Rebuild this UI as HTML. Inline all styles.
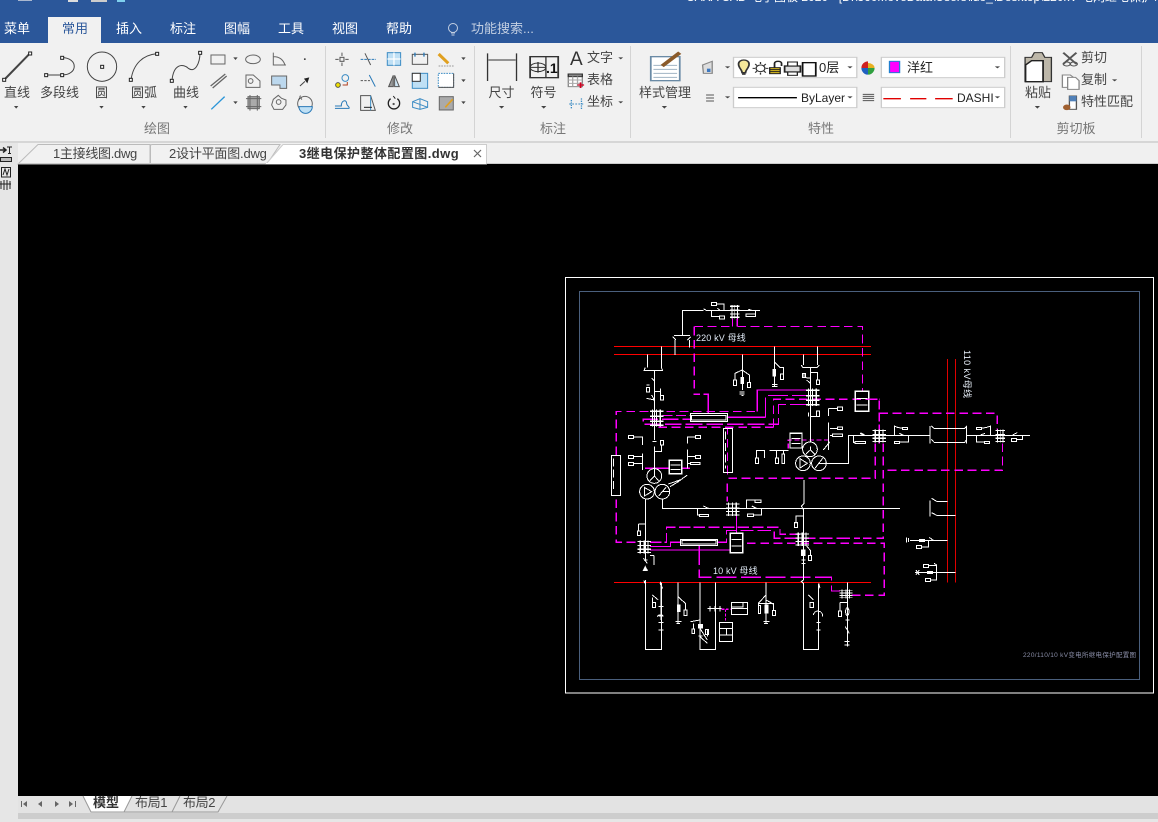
<!DOCTYPE html>
<html lang="zh"><head><meta charset="utf-8"><title>CAXA CAD</title>
<style>
html,body{margin:0;padding:0;background:#e6e6e6}
#p{position:relative;width:1158px;height:822px;overflow:hidden;background:#e6e6e6;font-family:"Liberation Sans","Noto Sans CJK SC",sans-serif;font-size:13px;color:#444}
#p div,#p span.t{position:absolute;white-space:nowrap}
.c{transform:translateX(-50%)}
.m{color:#fff;line-height:18px;top:20px}
.g{color:#777;top:121px;line-height:16px}
.l{line-height:16px}
svg{position:absolute;left:0;top:0}
</style></head><body><div id="p">
<div style="left:0;top:0;width:1158px;height:43px;background:#2b579a"></div>
<div style="left:686px;top:-11px;color:#fff;font-size:12px;line-height:16px">CAXA CAD 电子图板 2020 - [D:\360MoveData\Users\ldo_\Desktop\220kV 电网继电保护\</div>
<div style="left:18px;top:0;width:14px;height:1px;background:#aab8d0"></div>
<div style="left:68px;top:0;width:10px;height:2px;background:#ddd"></div>
<div style="left:91px;top:0;width:16px;height:2px;background:#ccc"></div>
<div style="left:117px;top:0;width:8px;height:2px;background:#7fd0ee"></div>
<div style="left:48px;top:17px;width:53px;height:27px;background:#f1f1f1"></div>
<div class="m" style="left:4px">菜单</div>
<div class="m" style="left:62px;color:#2b579a">常用</div>
<div class="m" style="left:116px">插入</div>
<div class="m" style="left:170px">标注</div>
<div class="m" style="left:224px">图幅</div>
<div class="m" style="left:278px">工具</div>
<div class="m" style="left:332px">视图</div>
<div class="m" style="left:386px">帮助</div>
<div class="m" style="left:471px;color:#c3cfe2">功能搜索...</div>
<div style="left:0;top:43px;width:1158px;height:98px;background:#f1f1f1"></div>
<div style="left:0;top:141px;width:1158px;height:2px;background:#d6d6d6"></div>
<div style="left:0;top:143px;width:1158px;height:21px;background:#f0f0f0"></div>
<div style="left:0;top:143px;width:18px;height:679px;background:#e6e6e6"></div>
<div style="left:18px;top:164px;width:1140px;height:632px;background:#000"></div>
<div style="left:18px;top:796px;width:1140px;height:17px;background:#e3e3e3"></div>
<div style="left:18px;top:813px;width:1140px;height:6px;background:#cdcdcd"></div>

<svg width="1158" height="822" viewBox="0 0 1158 822">
<defs>
<g id="gr" fill="none" stroke="#fff" stroke-width="3.500"><path d="M8,0V40M20,0V40M31,0V40M0,4H40M0,16H40M0,27H40M0,37H40"/></g>
</defs>
<!-- separators -->
<path d="M325.500,46V138M474.500,46V138M630.500,46V138M1010.500,46V138M1141.500,46V138" stroke="#d4d4d4"/>
<!-- doc tabs -->
<path d="M18,164L38,144.500H150V164Z" fill="#f1f1f1" stroke="#bbb"/>
<path d="M150.500,164V145L152,144.500H280L267,164Z" fill="#f1f1f1" stroke="#bbb"/>
<path d="M266,164L283,144.500H486.500V164Z" fill="#fff" stroke="#ccc"/>
<path d="M474,150L481,157M481,150L474,157" stroke="#666" stroke-width="1.200"/>
<path d="M18,163.500H1158" stroke="#ccc"/>
<path d="M266,163.500H486" stroke="#fff"/>
<!-- left strip icons -->
<g fill="none" stroke="#222" stroke-width="1">
<path d="M0,150H5M3,147.500L6,150L3,152.500" stroke-width="1.500"/>
<path d="M7,147H12M9.500,147V153.500M8,153.500H11"/>
<rect x="0.500" y="157.500" width="11" height="4" fill="#bbb"/>
<rect x="1.500" y="167.500" width="9" height="9.500"/><path d="M3,175L5,169L7,175L9,169"/>
<path d="M1,181V189M4,180V190M7,180V190M10,181V189M0,184H11"/>
</g>
<!-- bulb in tabs -->
<g fill="none" stroke="#c3cfe2" stroke-width="1"><circle cx="453" cy="28" r="4.500"/><path d="M451,33H455M451.500,35H454.500"/></g>
<!-- ribbon draw icons, zoom1 coordinates -->
<g transform="scale(.3333)" fill="none" stroke="#444" stroke-width="3">
<path d="M12,240L90,160" stroke-width="6"/>
<path d="M138,225H186M186,173C235,173 235,225 186,225"/>
<circle cx="306" cy="200" r="44"/>
<path d="M393,240C400,190 430,165 471,161"/>
<path d="M516,243C520,190 550,190 565,205C585,220 600,190 600,158"/>
<g fill="#fff" stroke="#222" stroke-width="3">
<rect x="8" y="235" width="9" height="9"/><rect x="86" y="156" width="9" height="9"/>
<rect x="134" y="221" width="9" height="9"/><rect x="182" y="221" width="9" height="9"/><rect x="182" y="169" width="9" height="9"/>
<rect x="302" y="196" width="9" height="9"/>
<rect x="388" y="235" width="9" height="9"/><rect x="467" y="157" width="9" height="9"/>
<rect x="511" y="238" width="9" height="9"/><rect x="596" y="154" width="9" height="9"/>
</g>
<g stroke="#666">
<rect x="633" y="165" width="42" height="27"/>
<ellipse cx="759" cy="178" rx="22" ry="13"/>
<path d="M820,158V195H858M820,170C840,170 850,180 855,195"/>
<path d="M632,258L676,222M638,264L680,228" stroke-width="4"/>
<path d="M738,225H760L780,243V262H738Z"/><circle cx="752" cy="243" r="7"/>
<path d="M815,228H860V265H840V255H815Z" fill="#bcd8ee"/>
<rect x="744" y="290" width="34" height="36" fill="#aaa"/>
<path d="M738,296H784M738,320H784M750,285V332M772,285V332"/>
<path d="M835,286L845,295L858,300V315L848,328H822L815,315L820,298Z"/><circle cx="836" cy="306" r="7"/>
<circle cx="915" cy="311" r="22"/>
<path d="M897,320H937A20,20 0 0 1 897,320Z" fill="#bfe0f5" stroke="#2a7ab8"/>
</g>
<path d="M634,328L674,290" stroke="#2a95d8" stroke-width="4"/>
<rect x="912" y="175" width="5" height="5" fill="#444" stroke="none"/>
<path d="M900,258L915,244" stroke="#444" stroke-width="3"/>
<path d="M912,236L928,232L922,250Z" fill="#222" stroke="none"/>
<text x="895" y="300" font-size="18" fill="#333" stroke="none">A</text>
<!-- modify -->
<g stroke="#555">
<rect x="1020" y="172" width="12" height="12"/><path d="M1026,158V168M1026,188V198M1006,178H1016M1036,178H1046"/>
<path d="M1082,178H1128" stroke="#2a7ab8" stroke-dasharray="8 3"/><path d="M1095,160L1112,195" stroke-width="3"/>
<path d="M1082,242H1110" stroke-dasharray="7 4"/><path d="M1108,225L1126,260" stroke="#2a7ab8"/>
<rect x="1162" y="158" width="40" height="38" fill="#bfe0f5" stroke="#3c8cc4"/><path d="M1182,158V196M1162,177H1202" stroke="#fff" stroke-width="4"/>
<rect x="1237" y="163" width="46" height="30" stroke="#555"/><path d="M1245,158V170M1272,158V170" stroke="#2a7ab8" stroke-width="4"/>
<path d="M1316,162L1345,190" stroke="#e0a020" stroke-width="9"/><path d="M1316,198H1362" stroke="#999" stroke-dasharray="5 3"/>
<circle cx="1014" cy="255" r="7" fill="#f0e000"/><circle cx="1036" cy="234" r="10" stroke="#3c8cc4"/><path d="M1028,255H1042V246" stroke="#b04020"/>
<path d="M1166,260L1180,226V260Z" fill="#999"/><path d="M1184,226L1198,260H1184Z" fill="#cfe6f5"/>
<rect x="1237" y="220" width="46" height="45" fill="#bfe0f5" stroke="#3c8cc4"/><rect x="1237" y="220" width="24" height="24" fill="#fff" stroke="#333"/>
<rect x="1315" y="220" width="46" height="42" fill="#fff" stroke="#3c8cc4" stroke-dasharray="5 3"/><path d="M1315,262H1361V220"/>
<path d="M1005,325H1048M1005,318H1024C1024,300 1040,298 1040,310C1040,318 1048,318 1048,325" stroke="#2a7ab8"/>
<path d="M1082,287H1112L1126,331H1082Z"/><path d="M1112,287V331" stroke="#3c8cc4"/><path d="M1092,322H1116" stroke="#222"/>
<path d="M1172,296A17,17 0 1 0 1192,296" stroke="#222" stroke-width="4"/><path d="M1180,288L1186,296" stroke="#222" stroke-width="3"/><circle cx="1181" cy="312" r="2" fill="#222"/>
<path d="M1238,305L1260,296L1283,305V322L1260,328L1238,322Z" stroke="#3c8cc4"/><path d="M1260,296V328M1238,305L1283,322" stroke="#3c8cc4"/>
<rect x="1318" y="290" width="42" height="40" fill="#aaa" stroke="#666"/><path d="M1336,322L1358,298" stroke="#e0a020" stroke-width="5"/>
</g>
<!-- small arrows -->
<g fill="#444" stroke="none">
<path d="M700,172H713L706.500,180Z"/><path d="M700,304H713L706.500,312Z"/>
<path d="M1384,172H1397L1390.500,180Z"/><path d="M1384,238H1397L1390.500,246Z"/><path d="M1384,304H1397L1390.500,312Z"/>
<path d="M42,318H55L48.500,326Z"/><path d="M298,318H311L304.500,326Z"/><path d="M424,318H437L430.500,326Z"/><path d="M550,318H563L556.500,326Z"/>
</g>
</g>
<!-- ribbon zoom2 coordinates -->
<g transform="translate(470 0) scale(.4388 .3333)" fill="none" stroke="#333" stroke-width="3">
<path d="M40,160V243M106,160V243M42,180H104" stroke-width="3"/>
<rect x="137" y="170" width="64" height="63" stroke-width="4"/><path d="M173,170V233"/>
<ellipse cx="155" cy="202" rx="18" ry="13"/><path d="M137,202H172M155,186V218"/>
<rect x="224" y="222" width="32" height="38" fill="#fff" stroke="#888"/><rect x="224" y="222" width="32" height="8" fill="#888"/>
<path d="M224,240H256M224,250H256M234,230V260M245,230V260" stroke="#aaa"/>
<path d="M245,255H260M252,247V264" stroke="#d00020" stroke-width="4"/>
<path d="M231,300V328M254,295V328M226,312H258" stroke="#3c8cc4" stroke-dasharray="4 3"/>
<rect x="412" y="170" width="66" height="72" fill="#fff" stroke="#6a8aa5" stroke-width="4"/>
<path d="M418,196H472M418,208H472M418,220H472M418,232H472" stroke="#a0b4c4"/>
<path d="M438,198L478,158" stroke="#8a5a2a" stroke-width="10"/>
<path d="M530,195L552,184V220H532Z" fill="#ddd" stroke="#888"/><rect x="540" y="206" width="8" height="10" fill="#3c78c0" stroke="none"/>
<path d="M538,285H556M538,294H556M538,303H556" stroke="#555"/>
<rect x="600.500" y="172" width="281" height="61" fill="#fff" stroke="#ccc"/>
<rect x="937.500" y="172" width="281" height="61" fill="#fff" stroke="#ccc"/>
<rect x="600.500" y="262" width="281" height="61" fill="#fff" stroke="#ccc"/>
<rect x="937.500" y="262" width="281" height="61" fill="#fff" stroke="#ccc"/>
<path d="M612,192C612,176 636,176 636,192C636,205 628,208 628,218H620C620,208 612,205 612,192Z" fill="#f5e89a" stroke="#333" stroke-width="4"/><path d="M620,222H628" stroke-width="5"/>
<circle cx="662" cy="205" r="10" stroke="#333"/><path d="M662,186V192M662,218V224M644,205H650M674,205H680M650,192L654,197M674,192L670,197M650,218L654,213M674,218L670,213" stroke="#333"/>
<rect x="683" y="203" width="24" height="18" fill="#e0c020" stroke="#222" stroke-width="3"/><path d="M683,209H707M683,215H707" stroke="#222"/><path d="M694,203V190C694,182 710,182 710,190V198" stroke="#222" stroke-width="4"/>
<rect x="717" y="198" width="36" height="18" fill="#ddd" stroke="#222" stroke-width="4"/><rect x="724" y="186" width="22" height="12" fill="#fff" stroke="#222"/><rect x="724" y="216" width="22" height="10" fill="#fff" stroke="#222"/>
<rect x="758" y="188" width="30" height="40" fill="#fff" stroke="#111" stroke-width="4"/>
<circle cx="907" cy="204" r="15" stroke="none" fill="#e8b020"/><path d="M907,204L892,204A15,20 0 0 1 907,184Z" fill="#d02020" stroke="none"/><path d="M907,204V224A15,20 0 0 1 892,204Z" fill="#2060c0" stroke="none"/><path d="M907,204L922,204A15,20 0 0 1 907,224Z" fill="#30a040" stroke="none"/>
<rect x="956" y="184" width="23" height="34" fill="#ff00ff" stroke="#2080d0" stroke-width="3"/>
<path d="M611,293H745" stroke="#000" stroke-width="4"/>
<path d="M895,283H921M895,289H921M895,295H921M895,302H921" stroke="#555"/>
<path d="M942,296H982M1003,296H1040M1060,296H1100" stroke="#e00000" stroke-width="4"/>
<path d="M1265,172V245H1325V172H1310L1304,158H1286L1280,172Z" fill="#bdb7a9" stroke="#333"/>
<path d="M1266,195L1280,182H1306V245H1266Z" fill="#fff" stroke="#222" stroke-width="4"/>
<path d="M1352,158L1382,192M1382,158L1352,192" stroke="#555" stroke-width="5"/><ellipse cx="1360" cy="192" rx="8" ry="6" stroke="#555"/><ellipse cx="1376" cy="192" rx="8" ry="6" stroke="#555"/>
<path d="M1350,225H1368L1378,235V262H1350Z" fill="#fff" stroke="#888"/><path d="M1362,232H1380L1388,242V268H1362Z" fill="#fff" stroke="#888"/>
<rect x="1366" y="288" width="16" height="40" fill="#fff" stroke="#555"/><rect x="1366" y="288" width="16" height="16" fill="#5080b8" stroke="none"/><circle cx="1360" cy="322" r="7" fill="#a06030" stroke="#a06030"/>
<g fill="#444" stroke="none">
<path d="M66,318H78L72,326Z"/><path d="M162,318H174L168,326Z"/><path d="M437,318H449L443,326Z"/><path d="M1287,318H1299L1293,326Z"/>
<path d="M338,172H349L343.500,178Z"/><path d="M338,304H349L343.500,310Z"/>
<path d="M581,199H593L587,205Z"/><path d="M581,289H593L587,295Z"/>
<path d="M860,199H872L866,205Z"/><path d="M860,289H872L866,295Z"/>
<path d="M1196,199H1208L1202,205Z"/><path d="M1196,289H1208L1202,295Z"/><path d="M1463,238H1475L1469,244Z"/>
</g>
</g>
<!-- nav arrows, bottom tabs -->
<g fill="#666"><path d="M27,801V807L23,804Z"/><rect x="21" y="801" width="1" height="6"/><path d="M42,801V807L38,804Z"/><path d="M55,801V807L59,804Z"/><path d="M69,801V807L73,804Z"/><rect x="75" y="801" width="1" height="6"/></g>
<path d="M83,796L91,812H124L132,796Z" fill="#fff"/>
<path d="M83,796L91,812H124L132,796M124,812H172L180,796M172,812H218L227,796" fill="none" stroke="#999"/>
<!-- drawing -->
<g shape-rendering="crispEdges" fill="none">
<rect x="565.500" y="277.500" width="588" height="415.500" stroke="#fff"/>
<rect x="579.500" y="291.500" width="560" height="388" stroke="#4a5f7d"/>
<path d="M614,346.500H871M614,354.500H871M614,582.500H871" stroke="#f00" stroke-width="1"/>
<path d="M947.500,359V582.500M955.500,359V582.500" stroke="#e00000"/>
<!-- zoom3 -->
<g transform="translate(600 290) scale(.3333)" stroke-width="3">
<g stroke="#f0f" stroke-width="3.500">
<path d="M283,110V313H300" stroke-dasharray="26 14"/>
<path d="M283,110H398M412,110H788V305" stroke-dasharray="26 14"/>
<path d="M398,85V110M412,85V110"/>
<path d="M310,313H325V370M472,365V300H620M383,382H497"/>
<path d="M497,382V317H620" stroke-dasharray="60 12"/>
<path d="M49,495V365H472" stroke-dasharray="26 14"/>
<path d="M521,412V328H838" stroke-dasharray="26 14"/>
<path d="M826,460V565H383V412" stroke-dasharray="26 14"/>
<path d="M175,412H521" stroke-dasharray="26 14"/>
<path d="M620,344H536V403H130V388H270" stroke-dasharray="50 12"/>
<path d="M135,535H208M245,535H270"/>
<path d="M565,475V450H690" stroke-dasharray="14 8"/>
<path d="M188,377H270" stroke-dasharray="30 10"/>
</g>
<g stroke="#fff">
<path d="M247,135V62H310M320,62H480M350,42H372V60M335,62V80H358M352,55L362,62"/>
<rect x="334" y="38" width="16" height="9"/><rect x="358" y="78" width="16" height="9"/><rect x="438" y="72" width="28" height="7"/><path d="M466,75V62"/>
<path d="M310,56L320,62M445,58L458,62"/>
<path d="M222,136H270M218,140L228,150M262,150L272,140M225,150V195M268,150V172M247,135V138"/>
<path d="M142,193V232M184,170V232M136,232L132,242H188L184,232M163,242V272L155,265M163,272V330L155,315M181,305H163M163,330L140,325M181,295V316M139,285H149"/>
<rect x="139" y="292" width="10" height="14"/><rect x="181" y="316" width="10" height="14"/>
<path d="M163,330V450M163,470V545M157,455H170"/>
<rect x="181" y="452" width="9" height="13"/><path d="M185,465V484H165"/>
<path d="M427,193V300M427,240L405,250V270M427,240L448,255V277"/>
<rect x="400" y="270" width="10" height="16"/><rect x="442" y="277" width="10" height="16"/><rect x="423" y="262" width="8" height="18" fill="#fff"/>
<path d="M418,306H434M418,312H434M424,316H430"/>
<path d="M523,170V290M523,215L540,232H550V252"/><rect x="519" y="238" width="8" height="20" fill="#fff"/><rect x="541" y="252" width="10" height="16"/><path d="M516,284H532M516,290H532"/>
<path d="M610,193V225M652,170V225M604,225L608,232H652L658,225M631,232V458M612,250V262M631,265L612,262M631,248H652V270M620,270L631,280"/>
<rect x="607" y="250" width="9" height="12"/><rect x="649" y="270" width="9" height="14"/>
<rect x="649" y="363" width="9" height="16"/><path d="M625,368V380M631,380H650"/>
<rect x="271" y="371" width="111" height="24" stroke-width="3"/><rect x="275" y="376" width="103" height="14"/>
<rect x="766" y="304" width="40" height="60" stroke-width="4"/><path d="M770,325H802M770,345H802"/>
<rect x="370" y="415" width="28" height="132" stroke-width="3"/><path d="M377,425V535" stroke-dasharray="24 10"/>
<rect x="34" y="496" width="28" height="120" stroke-width="3"/><path d="M40,505V600" stroke-dasharray="24 10"/>
<rect x="85" y="436" width="16" height="9"/><rect x="85" y="496" width="16" height="9"/><rect x="85" y="517" width="16" height="9"/><rect x="272" y="517" width="28" height="7"/><rect x="286" y="436" width="16" height="9"/><rect x="286" y="496" width="16" height="9"/>
<path d="M101,441H127V465M101,500H127M101,521H127M127,490V540M286,441H262V460M286,500H262M272,521H262M262,478V535"/>
<path d="M262,555L235,575L210,590"/>
<rect x="208" y="511" width="37" height="40" stroke-width="4"/><path d="M212,525H241M212,538H241"/>
<circle cx="163" cy="558" r="22"/><path d="M163,545V558M163,558L150,572M163,558L176,572"/>
<rect x="570" y="430" width="36" height="44" stroke-width="4"/><path d="M574,445H602M574,460H602"/>
<circle cx="630" cy="478" r="22"/><circle cx="609" cy="520" r="22"/><circle cx="657" cy="520" r="22"/>
<path d="M600,506L622,520L600,534ZM645,535L668,505M657,520H680M680,520H745V436H782M782,436H830"/>
<path d="M631,470V480M631,480L618,492M631,480L644,492"/>
<path d="M685,355H712M685,355V378M685,398V480M690,415L712,415M690,436L698,436M670,480L690,455M760,436V458H765M782,428L795,436"/>
<rect x="712" y="351" width="16" height="10"/><rect x="712" y="411" width="16" height="7"/><rect x="698" y="432" width="30" height="8"/><rect x="765" y="454" width="32" height="7"/>
<path d="M468,482H494V504M470,482V504M508,482H565M530,482V505M550,482V492"/>
<rect x="466" y="504" width="9" height="16"/><rect x="526" y="504" width="9" height="16"/><rect x="546" y="492" width="8" height="28"/>
</g>
<g transform="translate(390 45) scale(.72 1)"><use href="#gr"/></g>
<g transform="translate(150 358) scale(1 1.300)"><use href="#gr"/></g>
<g transform="translate(618 296) scale(1 1.300)"><use href="#gr"/></g>
</g>
<!-- zoom4 -->
<g transform="translate(600 480) scale(.3333)" stroke-width="3">
<g stroke="#f0f" stroke-width="3.500">
<path d="M49,58V187H115" stroke-dasharray="26 14"/>
<path d="M150,187H200V142H540V163H600" stroke-dasharray="34 10"/>
<path d="M150,200H212V187H240"/>
<path d="M352,187H380V152H523V175H780" stroke-dasharray="40 12"/>
<path d="M150,210H390"/>
<path d="M298,195V292H695V333H720" stroke-dasharray="60 14"/>
<path d="M755,346H853V190H430" stroke-dasharray="26 14"/>
<path d="M410,100V160"/>
<path d="M382,10V65" stroke-dasharray="26 14"/>
<path d="M365,388H395M377,388V425" stroke-dasharray="8 5"/>
</g>
<g stroke="#fff">
<circle cx="141" cy="35" r="22"/><circle cx="187" cy="35" r="22"/>
<path d="M133,22L155,35L133,48ZM176,48L198,22M187,35H210M205,12L240,0"/>
<path d="M136,57V240M115,132H136M115,132V155M187,57V85H900"/>
<rect x="112" y="153" width="9" height="13"/>
<path d="M136,260V270M132,240H142M162,226V255M150,226H162M130,235L142,250M132,268L142,268M136,260L130,272L142,272Z"/>
<path d="M136,300V508H185V310L180,306M135,310L132,302"/>
<path d="M183,307V420M180,310L188,325M157,345L175,360M157,368V352M176,380H190M176,408H190M172,410A10,10 0 0 1 190,410M176,428H190M176,450H190"/>
<rect x="157" y="368" width="10" height="15"/>
<path d="M234,307V430M234,350L256,370V390M227,425H245M230,430H240"/>
<rect x="232" y="375" width="8" height="20" fill="#fff"/><rect x="252" y="390" width="9" height="17"/>
<path d="M300,307V508H346V307M300,420L272,425M280,430V448M300,445L322,480M322,448V470M300,470L322,490"/>
<rect x="276" y="447" width="8" height="14"/><rect x="317" y="448" width="9" height="16"/><rect x="295" y="434" width="12" height="10" fill="#fff"/><path d="M295,468H307"/>
<path d="M322,386H365M330,378V394M345,378V394M360,378V394"/>
<rect x="394" y="368" width="49" height="36" stroke-width="3"/><rect x="394" y="368" width="35" height="13"/><path d="M396,386H441"/>
<rect x="358" y="427" width="40" height="58" stroke-width="3"/><path d="M360,445H396M360,465H396M380,445V465"/>
<rect x="391" y="160" width="37" height="58" stroke-width="4"/><path d="M395,178H424M395,198H424"/>
<rect x="241" y="178" width="112" height="18" stroke-width="3"/><rect x="246" y="182" width="102" height="10"/>
<path d="M292,85V105H300M310,78L325,85"/><rect x="298" y="103" width="28" height="6"/>
<path d="M440,85V60H465M485,85V105H460M455,78L470,85"/><rect x="465" y="60" width="18" height="8"/><rect x="443" y="102" width="17" height="8"/>
<path d="M612,0V70L604,78L610,88V300L604,304L610,310V508H656V310M610,108H588V130"/>
<rect x="583" y="128" width="9" height="14"/>
<path d="M610,198V250M620,198L632,212V226"/><rect x="625" y="226" width="9" height="16"/><rect x="605" y="210" width="10" height="16" fill="#fff"/><path d="M604,240H616M604,250H616"/>
<path d="M656,310L660,325M625,345L640,360M656,352V400M640,405A10,10 0 0 1 668,410M650,428H662M650,450H662"/>
<rect x="630" y="368" width="10" height="15"/>
<path d="M498,307V430M498,345L475,370V376M498,360L520,372V392M475,370H522M490,425H508M492,430H504"/>
<rect x="475" y="376" width="7" height="24"/><rect x="495" y="375" width="9" height="24" fill="#fff"/><rect x="517" y="392" width="10" height="15"/>
<path d="M742,307V500M720,368V393M742,368H720M736,420H748M736,440L748,460M734,485H748M734,495H748"/>
<rect x="715" y="393" width="9" height="16"/><ellipse cx="742" cy="395" rx="5" ry="12"/>
</g>
<use href="#gr" x="378" y="68"/>
<use href="#gr" x="113" y="181"/>
<use href="#gr" x="587" y="158"/>
<g transform="translate(718 328) scale(1 .68)"><use href="#gr"/></g>
</g>
<!-- zoom5 -->
<g transform="translate(860 340) scale(.3333)" stroke-width="3">
<g stroke="#f0f" stroke-width="3.500">
<path d="M25,178H58V310" stroke-dasharray="28 8"/>
<path d="M58,220H412V268" stroke-dasharray="26 14"/>
<path d="M428,310V391H70" stroke-dasharray="26 14"/>
<path d="M46,310V415H0" stroke-dasharray="26 14"/>
<path d="M70,310V595H0" stroke-dasharray="26 14"/>
</g>
<g stroke="#fff">
<path d="M0,286H210M320,286H510"/>
<rect x="128" y="262" width="15" height="7"/><rect x="103" y="304" width="16" height="7"/><path d="M103,286V258L112,262L128,265M146,286V306H119M118,280L130,286"/>
<path d="M210,258V310M320,258V310M222,265H315M222,307H315M214,258L222,265M314,265L320,258M214,298L222,307M314,307L320,298"/>
<rect x="349" y="262" width="15" height="7"/><rect x="373" y="304" width="16" height="7"/><path d="M392,286V258L380,262L364,265M349,286V306H373M362,285L375,280"/>
<rect x="454" y="295" width="16" height="9"/><path d="M470,299H488V286M458,285L472,278"/>
<path d="M210,482V530M215,475L230,484H263M215,518L230,526H287"/>
<path d="M150,601H263M205,601V621H185M208,592L220,601M140,592V608M145,594V606"/>
<rect x="178" y="598" width="16" height="6" fill="#fff"/><rect x="170" y="616" width="15" height="9"/>
<path d="M165,697H287M230,675V720H212M206,676H230M222,670L230,675M168,690L178,705M178,690L168,705"/>
<rect x="202" y="694" width="16" height="6" fill="#fff"/><rect x="190" y="673" width="15" height="9"/><rect x="196" y="715" width="15" height="9"/>
</g>
<use href="#gr" x="38" y="268"/>
<g transform="translate(407 268) scale(.7 1)"><use href="#gr"/></g>
<path d="M0,280L12,286M0,304H17V311H0" stroke="#fff"/>
</g>
</g>
<!-- drawing text -->
<text x="696" y="341" font-size="9" fill="#dfe8f4" letter-spacing=".15" font-family="Liberation Sans,Noto Sans CJK SC,sans-serif">220 kV 母线</text>
<text x="713" y="574" font-size="9" fill="#dfe8f4" letter-spacing=".15" font-family="Liberation Sans,Noto Sans CJK SC,sans-serif">10 kV 母线</text>
<text transform="translate(964 350) rotate(90)" font-size="9" fill="#e6eef8" letter-spacing=".4" font-family="Liberation Sans,Noto Sans CJK SC,sans-serif">110 kV母线</text>
<text x="1023" y="657" font-size="6.500" fill="#8a8ea8" letter-spacing=".3" font-family="Liberation Sans,Noto Sans CJK SC,sans-serif">220/110/10 kV变电所继电保护配置图</text>
</svg>

<div class="l" style="left:570px;top:50px;font-size:19px;line-height:20px;color:#333">A</div>
<div class="l" style="left:546px;top:60px;font-weight:bold;font-size:14px;color:#111">.1</div>
<div class="l c" style="left:17px;top:85px">直线</div>
<div class="l c" style="left:59.500px;top:85px">多段线</div>
<div class="l c" style="left:101.500px;top:85px">圆</div>
<div class="l c" style="left:144px;top:85px">圆弧</div>
<div class="l c" style="left:186px;top:85px">曲线</div>
<div class="g c" style="left:157px">绘图</div>
<div class="g c" style="left:400px">修改</div>
<div class="g c" style="left:553px">标注</div>
<div class="g c" style="left:821px">特性</div>
<div class="g c" style="left:1076px">剪切板</div>
<div class="l c" style="left:501.500px;top:85px">尺寸</div>
<div class="l c" style="left:543.500px;top:85px">符号</div>
<div class="l" style="left:587px;top:50px">文字</div>
<div class="l" style="left:587px;top:72px">表格</div>
<div class="l" style="left:587px;top:94px">坐标</div>
<div class="l c" style="left:665px;top:85px">样式管理</div>
<div class="l" style="left:819px;top:60px;color:#222">0层</div>
<div class="l" style="left:907px;top:60px;color:#222">洋红</div>
<div class="l" style="left:801px;top:90px;color:#222;font-size:12px">ByLayer</div>
<div class="l" style="left:957px;top:90px;color:#222;font-size:12px">DASHI</div>
<div class="l c" style="left:1038px;top:85px">粘贴</div>
<div class="l" style="left:1081px;top:50px">剪切</div>
<div class="l" style="left:1081px;top:72px">复制</div>
<div class="l" style="left:1081px;top:94px">特性匹配</div>
<div class="l" style="left:53px;top:146px;letter-spacing:-.3px">1主接线图.dwg</div>
<div class="l" style="left:169px;top:146px;letter-spacing:-.2px">2设计平面图.dwg</div>
<div class="l" style="left:299px;top:146px;font-weight:bold;color:#333;letter-spacing:.45px">3继电保护整体配置图.dwg</div>
<div class="l" style="left:93px;top:795px;font-weight:bold;color:#333">模型</div>
<div class="l" style="left:135px;top:795px;letter-spacing:-.4px">布局1</div>
<div class="l" style="left:183px;top:795px;letter-spacing:-.4px">布局2</div>
</div></body></html>
